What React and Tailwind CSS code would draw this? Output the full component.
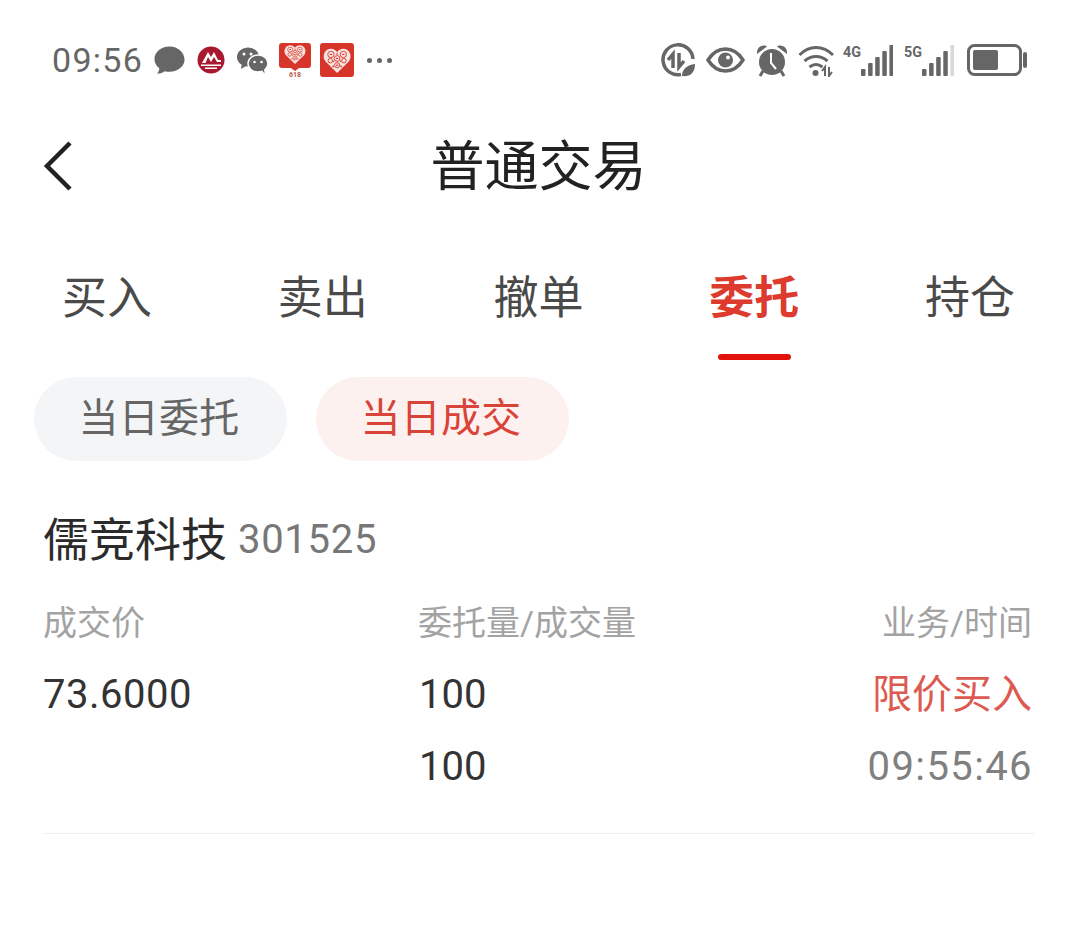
const CJK = { fontFamily: '"Roboto", "Noto Sans CJK SC", sans-serif' }

const tabs = ['买入', '卖出', '撤单', '委托', '持仓']

function HeartGrid({ x = 0, y = 0, s = 1 }) {
  return (
    <g transform={`translate(${x} ${y}) scale(${s})`}>
      <path d="M12.500 24 2 13.500C-1 9.500 1 3 6.500 2.500 9 2.300 11.300 3.500 12.500 5.500 13.700 3.500 16 2.300 18.500 2.500 24 3 26 9.500 23 13.500Z" fill="#f7e3df" />
      <g fill="none" stroke="#d8352a" strokeWidth=".8">
        <circle cx="7" cy="7.500" r="2.800" />
        <circle cx="18" cy="7.500" r="2.800" />
        <circle cx="12.500" cy="11" r="2.500" />
        <circle cx="6.500" cy="13" r="2" />
        <circle cx="18.500" cy="13" r="2" />
        <circle cx="12.500" cy="17" r="2.300" />
      </g>
      <g fill="#d8352a">
        <rect x="6" y="7" width="2" height="1" />
        <rect x="17" y="7" width="2" height="1" />
        <rect x="11.500" y="10.500" width="2" height="1" />
        <rect x="11.500" y="16.500" width="2" height="1" />
        <circle cx="9" cy="18" r=".8" />
        <circle cx="16" cy="18" r=".8" />
        <circle cx="12.500" cy="7" r=".7" />
        <circle cx="9.500" cy="13.500" r=".7" />
        <circle cx="15.500" cy="13.500" r=".7" />
      </g>
    </g>
  )
}

function StatusLeft() {
  return (
    <div className="flex items-center">
      <span className="text-[34px] leading-none tracking-[1.3px] text-[#666666]">09:56</span>
      <svg width="33" height="32" viewBox="0 0 34 32" className="ml-[10px]">
        <path d="M17 2C8 2 1.500 8 1.500 15c0 4 2 7.300 5 9.500 0 2-.8 4-2.500 5.500 3.500 0 6.300-1 8-2.500 1.600.4 3.200.6 5 .6 9 0 15.500-5.800 15.500-12.600S26 2 17 2Z" fill="#666666" />
      </svg>
      <svg width="28" height="28" viewBox="0 0 28 28" className="ml-[11px]">
        <circle cx="14" cy="14" r="13.500" fill="#a8182f" />
        <path d="M5 17 11 6l3 5 3-5 4 8h3v2h-4l-3-5-3 5-3-5-2.500 6Z" fill="#fff" />
        <path d="M4 18.500h20v1.500H4zM8 21.500h12V23H8z" fill="#fff" />
      </svg>
      <svg width="33" height="28" viewBox="0 0 33 28" className="ml-[11px]">
        <ellipse cx="12" cy="11" rx="11" ry="9.500" fill="#666666" />
        <path d="m6 17-1 6 6-3.500Z" fill="#666666" />
        <ellipse cx="22" cy="17.500" rx="10" ry="8.500" fill="#666666" stroke="#fff" strokeWidth="1.500" />
        <path d="m26 24 2.500 3.500-.5-5Z" fill="#666666" />
        <circle cx="8" cy="8" r="1.500" fill="#fff" />
        <circle cx="15" cy="8" r="1.500" fill="#fff" />
        <circle cx="18.500" cy="16" r="1.300" fill="#fff" />
        <circle cx="25.500" cy="16" r="1.300" fill="#fff" />
      </svg>
      <svg width="32" height="34" viewBox="0 0 32 34" className="ml-[10px]">
        <path d="M3 0h26a3 3 0 0 1 3 3v19a3 3 0 0 1-3 3h-9l-4 3-4-3H3a3 3 0 0 1-3-3V3a3 3 0 0 1 3-3Z" fill="#d8352a" />
        <HeartGrid x="5" y="0" s=".88" />
        <text x="16" y="33.500" textAnchor="middle" fontSize="7" fontWeight="700" fill="#b8564c" fontFamily="Roboto, sans-serif">618</text>
      </svg>
      <svg width="34" height="34" viewBox="0 0 34 34" className="ml-[9px]">
        <rect width="34" height="34" rx="3" fill="#d8352a" />
        <HeartGrid x="3" y="3" s="1.130" />
      </svg>
      <span className="ml-[13px] flex gap-[5px]">
        <i className="block size-[5px] rounded-full bg-[#666666]" />
        <i className="block size-[5px] rounded-full bg-[#666666]" />
        <i className="block size-[5px] rounded-full bg-[#666666]" />
      </span>
    </div>
  )
}

function Signal({ label, last = '#666666' }) {
  const bars = [7, 13, 19, 25, 31]
  return (
    <svg width="50" height="32" viewBox="0 0 50 32">
      <text x="0" y="13" fontSize="15" fontWeight="700" fill="#666666" textLength="18" lengthAdjust="spacingAndGlyphs" fontFamily="Roboto, sans-serif">{label}</text>
      {bars.map((h, i) => (
        <rect key={h} x={18 + i * 7.100} y={32 - h} width="4.500" height={h} rx="1" fill={i === 4 ? last : '#666666'} />
      ))}
    </svg>
  )
}

function StatusRight() {
  return (
    <div className="flex items-center">
      <svg width="35" height="35" viewBox="0 0 35 35">
        <path d="M20 31.500A15 15 0 1 1 32 16" fill="none" stroke="#666666" strokeWidth="3.500" />
        <path d="M12 25V11l-5 6M18 10v14l5-6" fill="none" stroke="#666666" strokeWidth="3.500" />
        <path d="M21 33c0-7 5-11 13-12 0 8-4 13-13 12Z" fill="#666666" />
      </svg>
      <svg width="39" height="26" viewBox="0 0 39 26" className="ml-[10px]">
        <path d="M2 13C7 5 12 2 19.500 2S32 5 37 13c-5 8-10 11-17.500 11S7 21 2 13Z" fill="none" stroke="#666666" strokeWidth="3.500" />
        <circle cx="19.500" cy="13" r="7.500" fill="#666666" />
        <circle cx="22" cy="10.500" r="2" fill="#fff" />
      </svg>
      <svg width="32" height="33" viewBox="0 0 32 33" className="ml-[11px]">
        <circle cx="16" cy="18" r="13" fill="#666666" />
        <path d="M1 10C.5 5 3.500 1.500 8 1.500c1.500 0 2.500.5 3 1Z" fill="#666666" />
        <path d="M31 10c.5-5-2.500-8.500-7-8.500-1.500 0-2.500.5-3 1Z" fill="#666666" />
        <path d="m7 27-3 5M25 27l3 5" stroke="#666666" strokeWidth="3" />
        <path d="M15 9v10l5 6" fill="none" stroke="#fff" strokeWidth="2" />
      </svg>
      <svg width="37" height="33" viewBox="0 0 37 33" className="ml-[10px]">
        <path d="M1.500 11C11 1 25 1 35 11M6.500 17c7-6 16-6 23 0M11.500 23c4-3 9-3 13 0" fill="none" stroke="#666666" strokeWidth="3" />
        <circle cx="17.500" cy="29" r="3" fill="#666666" />
        <path d="M27 32v-9l-3 4M31 23v9l3-4" fill="none" stroke="#666666" strokeWidth="2" />
      </svg>
      <div className="ml-[8px]"><Signal label="4G" /></div>
      <div className="ml-[11px]"><Signal label="5G" last="#d9d9d9" /></div>
      <svg width="62" height="32" viewBox="0 0 62 32" className="ml-[13px]">
        <rect x="1.500" y="1.500" width="52" height="29" rx="6" fill="none" stroke="#666666" strokeWidth="3" />
        <rect x="6" y="6" width="25" height="20" rx="2" fill="#666666" />
        <rect x="56" y="8" width="4" height="16" rx="2" fill="#666666" />
      </svg>
    </div>
  )
}

function Tabs() {
  return (
    <div className="flex justify-between pl-[62px] pr-[62px] mt-[71px]">
      {tabs.map((t) => (
        <div key={t} className="flex flex-col items-center">
          <span className={`text-[45px] leading-[60px] ${t === '委托' ? 'font-bold text-[#dd3b2e]' : 'text-[#4a4a4a]'}`}>{t}</span>
          <span className={`mt-[25px] h-[6px] w-[73px] rounded-full ${t === '委托' ? 'bg-[#e3120b]' : ''}`} />
        </div>
      ))}
    </div>
  )
}

function Row({ a, b, c, cClass }) {
  return (
    <div className="flex items-center text-[40px] leading-[72px] text-[#333333]">
      <span className="w-[376px] tracking-[0.5px]">{a}</span>
      <span className="flex-1">{b}</span>
      <span className={cClass}>{c}</span>
    </div>
  )
}

export default function App() {
  return (
    <div className="w-[1077px] h-[945px] bg-white overflow-hidden" style={CJK}>
      <div className="flex items-center justify-between pl-[52px] pr-[48px] pt-[42px] h-[78px]">
        <StatusLeft />
        <StatusRight />
      </div>

      <div className="relative flex items-center justify-center mt-[60px] h-[60px]">
        <svg width="30" height="52" viewBox="0 0 30 52" className="absolute left-[43px] top-[2px]">
          <path d="M27 3 4 26l23 23" fill="none" stroke="#222222" strokeWidth="4.500" />
        </svg>
        <h1 className="text-[54px] leading-[60px] text-[#222222]">普通交易</h1>
      </div>

      <Tabs />

      <div className="flex gap-[29px] pl-[34px] mt-[17px]">
        <span className="flex items-center justify-center w-[253px] h-[84px] rounded-full bg-[#f4f5f7] pr-[3px] text-[40px] tracking-[0.3px] text-[#666666]">当日委托</span>
        <span className="flex items-center justify-center w-[253px] h-[84px] rounded-full bg-[#fdf1ef] pr-[3px] text-[40px] tracking-[0.3px] text-[#d9443a]">当日成交</span>
      </div>

      <div className="pl-[43px] pr-[45px] mt-[47px]">
        <div className="flex items-center h-[64px]">
          <span className="text-[46px] leading-none text-[#2b2b2b]">儒竞科技</span>
          <span className="ml-[11px] text-[40px] leading-none tracking-[0.7px] text-[#777777]">301525</span>
        </div>
        <div className="flex items-center mt-[29px] text-[34px] leading-[44px] text-[#a3a3a3]">
          <span className="w-[375px]">成交价</span>
          <span className="flex-1">委托量/成交量</span>
          <span>业务/时间</span>
        </div>
        <div className="mt-[14px]">
          <Row a="73.6000" b="100" c="限价买入" cClass="text-[#dd5a52]" />
          <Row b="100" c="09:55:46" cClass="-mr-[1px] tracking-[1.4px] text-[#808080]" />
        </div>
        <div className="mt-[30px] h-px bg-[#eeeeee] -mr-[2px]" />
      </div>
    </div>
  )
}
